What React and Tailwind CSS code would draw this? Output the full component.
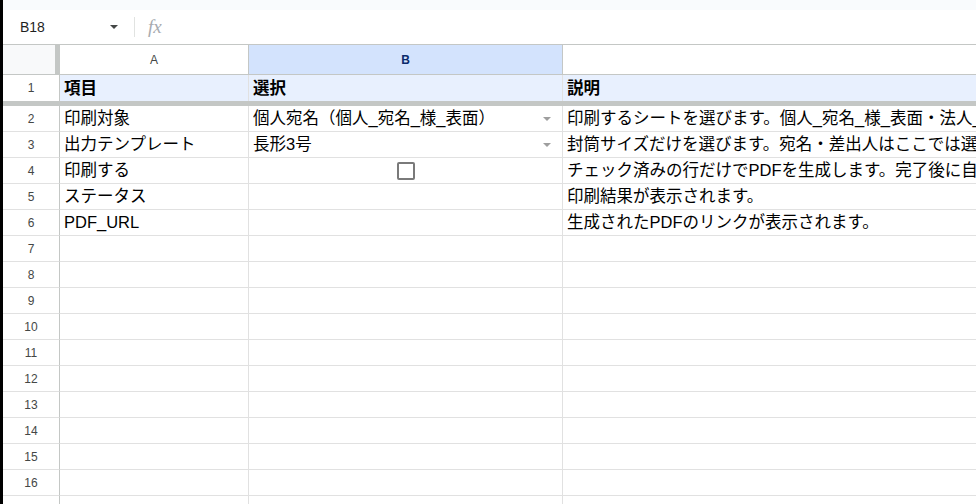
import React from 'react';

const font = { fontFamily: '"Liberation Sans", "Noto Sans CJK JP", Arial, sans-serif' };

const rows = [
    { a: '印刷対象', b: '個人宛名（個人_宛名_様_表面）', select: true, c: '印刷するシートを選びます。個人_宛名_様_表面・法人_宛名_御中_表面・差出人_裏面から選べます。' },
    { a: '出力テンプレート', b: '長形3号', select: true, c: '封筒サイズだけを選びます。宛名・差出人はここでは選びません。' },
    { a: '印刷する', check: true, c: 'チェック済みの行だけでPDFを生成します。完了後に自動でチェックが外れます。' },
    { a: 'ステータス', c: '印刷結果が表示されます。' },
    { a: 'PDF_URL', c: '生成されたPDFのリンクが表示されます。' },
];

const DropArrow = () => (
    <svg width="10" height="6" viewBox="0 0 10 6" className="shrink-0">
        <path d="M1 1h8L5 5z" fill="#9e9e9e" />
    </svg>
);

const Row = ({ n, r = {} }) => (
    <div className="flex h-[26px] shrink-0">
        <div className="w-[57px] shrink-0 border-r border-b border-[#c4c7c5] border-b-[#e1e1e1] flex items-center justify-center text-[12px] text-[#444746]">
            {n}
        </div>
        <div className="w-[189px] shrink-0 border-r border-b border-[#e1e1e1] flex items-center px-1 text-[16.5px] text-black whitespace-nowrap overflow-hidden">
            {r.a}
        </div>
        <div className="w-[314px] shrink-0 border-r border-b border-[#e1e1e1] flex items-center px-1 text-[16.5px] text-black whitespace-nowrap">
            {r.check ? (
                <div className="mx-auto w-[18px] h-[18px] border-2 border-[#7a7a7a] rounded-[2px]" />
            ) : (
                <>
                    <span className="flex-1 overflow-hidden">{r.b}</span>
                    {r.select && <span className="mr-[6px]"><DropArrow /></span>}
                </>
            )}
        </div>
        <div className="flex-1 border-b border-[#e1e1e1] flex items-center px-1 text-[16.5px] text-black whitespace-nowrap overflow-hidden">
            {r.c}
        </div>
    </div>
);

export default function App() {
    return (
        <div className="flex h-screen w-full overflow-hidden bg-white" style={font}>
            <div className="w-[3px] shrink-0 bg-black" />
            <div className="flex-1 flex flex-col min-w-0">
                <div className="h-[10px] shrink-0 bg-[#f9fbfd]" />

                {/* formula bar */}
                <div className="h-[35px] shrink-0 flex items-center border-b border-[#c4c7c5]">
                    <span className="ml-[17px] text-[14px] text-[#1f1f1f]">B18</span>
                    <span className="ml-[64px]">
                        <svg width="10" height="6" viewBox="0 0 10 6">
                            <path d="M1 1h8L5 5z" fill="#444746" />
                        </svg>
                    </span>
                    <div className="ml-[15px] w-px h-[20px] bg-[#e1e3e1]" />
                    <span className="ml-[13px] text-[19px] italic text-[#a8abaf]" style={{ fontFamily: '"Liberation Serif", serif' }}>
                        fx
                    </span>
                </div>

                {/* column headers */}
                <div className="flex h-[30px] shrink-0 border-b border-[#c4c7c5]">
                    <div className="w-[57px] shrink-0 flex bg-[#f8f9fa]">
                        <div className="flex-1" />
                        <div className="w-[5px] bg-[#c4c7c5]" />
                    </div>
                    <div className="w-[189px] shrink-0 border-r border-[#c4c7c5] flex items-center justify-center text-[12px] text-[#444746]">
                        A
                    </div>
                    <div className="w-[314px] shrink-0 border-r border-[#c4c7c5] bg-[#d3e3fd] flex items-center justify-center text-[12px] font-bold text-[#0b2a6b]">
                        B
                    </div>
                    <div className="flex-1" />
                </div>

                {/* row 1 (frozen) */}
                <div className="flex h-[26px] shrink-0">
                    <div className="w-[57px] shrink-0 border-r border-[#c4c7c5] flex items-center justify-center text-[12px] text-[#444746]">
                        1
                    </div>
                    <div className="w-[189px] shrink-0 border-r border-[#e1e1e1] bg-[#e8f0fe] flex items-center px-1 text-[16.5px] font-bold text-black">
                        項目
                    </div>
                    <div className="w-[314px] shrink-0 border-r border-[#e1e1e1] bg-[#e8f0fe] flex items-center px-1 text-[16.5px] font-bold text-black">
                        選択
                    </div>
                    <div className="flex-1 bg-[#e8f0fe] flex items-center px-1 text-[16.5px] font-bold text-black">
                        説明
                    </div>
                </div>
                <div className="h-[5px] shrink-0 bg-[#c4c7c5]" />

                {rows.map((r, i) => (
                    <Row key={i} n={i + 2} r={r} />
                ))}
                {Array.from({ length: 11 }, (_, i) => (
                    <Row key={'e' + i} n={i + 7} />
                ))}
            </div>
        </div>
    );
}
